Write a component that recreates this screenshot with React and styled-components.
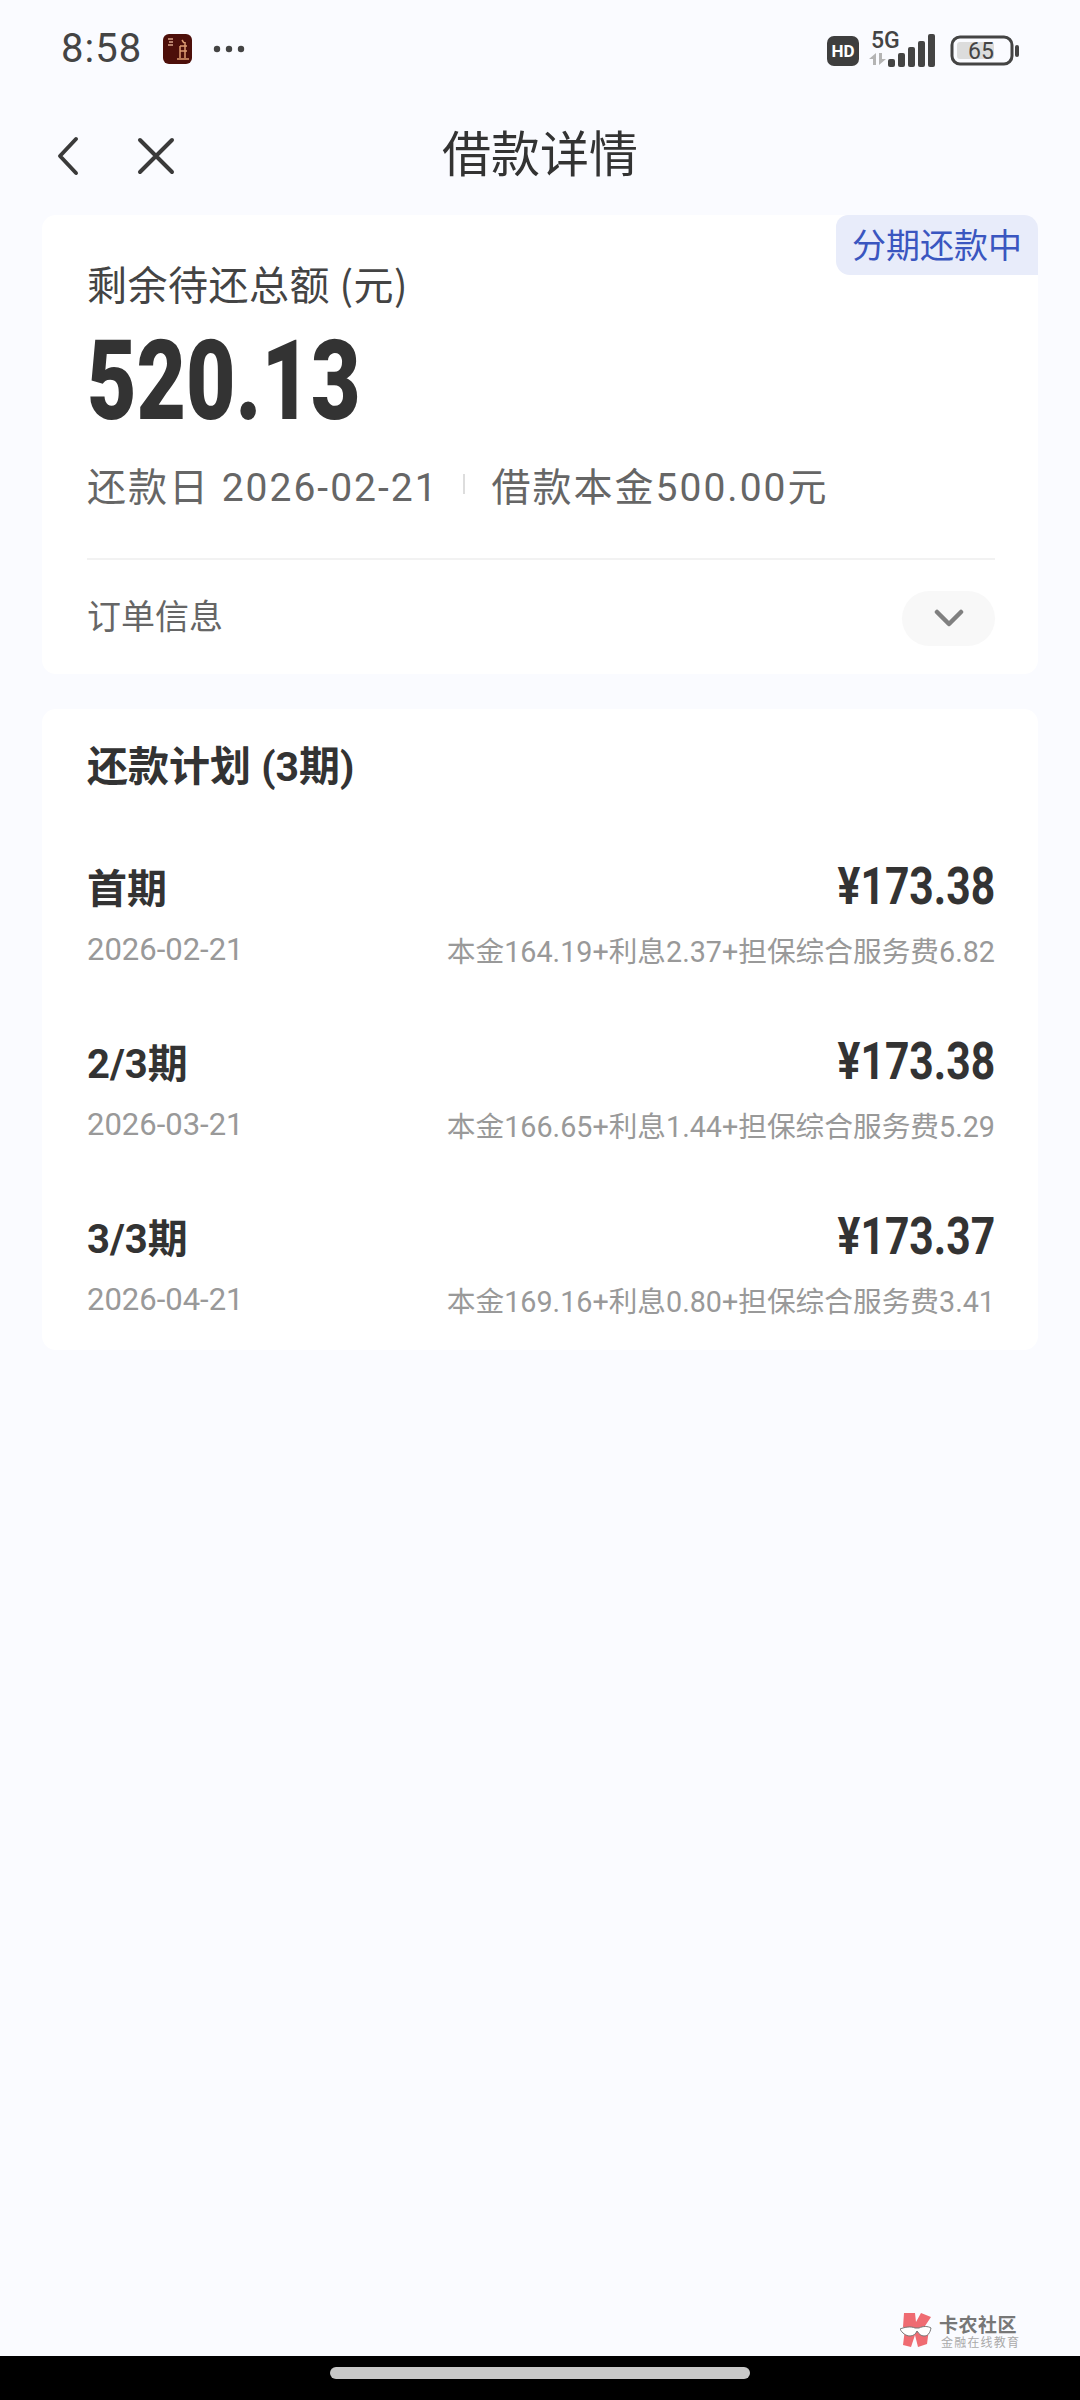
import React from "react";
import styled, { createGlobalStyle } from "styled-components";

const GlobalStyle = createGlobalStyle`
html, body {
  margin: 0;
  padding: 0;
  background: #fafbff;
}
body {
  font-family: Roboto, "Noto Sans CJK SC", sans-serif;
}
`

const Page = styled.div`
width: 1080px;
height: 2400px;
position: relative;
display: flex;
flex-direction: column;
overflow: hidden;
background: #fafbff;
`
const StatusBar = styled.div`
height: 100px;
box-sizing: border-box;
padding: 32px 60px 0 61px;
display: flex;
justify-content: space-between;
align-items: flex-start;
color: #444;
`
const StatusLeft = styled.div`
display: flex;
align-items: center;
height: 34px;
`
const Time = styled.span`
font-size: 40px;
line-height: 34px;
letter-spacing: 1px;
width: 102px;
`
const StatusRight = styled.div`
display: flex;
align-items: flex-start;
height: 34px;
`
const NavBar = styled.div`
height: 115px;
position: relative;
display: flex;
align-items: center;
justify-content: center;
`
const NavIcons = styled.div`
position: absolute;
left: 54px;
top: 36px;
display: flex;
gap: 55px;
align-items: center;
`
const Title = styled.h1`
margin: 0;
font-family: "Noto Sans CJK SC", sans-serif;
font-size: 49px;
font-weight: 400;
color: #333;
line-height: 70px;
margin-top: -13px;
`
const Card = styled.section`
position: relative;
margin: 0 42px;
background: #fff;
border-radius: 14px;
box-sizing: border-box;
`
const SummaryCard = styled(Card)`
height: 459px;
padding: 42px 43px 0 45px;
margin-bottom: 35px;
`
const PlanCard = styled(Card)`
height: 641px;
padding: 32px 43px 0 45px;
`
const Tag = styled.div`
position: absolute;
top: 0;
right: 0;
width: 202px;
height: 60px;
background: #e8ecfa;
color: #3a56c0;
font-family: "Noto Sans CJK SC", sans-serif;
font-size: 34px;
line-height: 58px;
text-align: center;
border-radius: 12px 14px 0 14px;
`
const Label = styled.div`
font-family: "Noto Sans CJK SC", sans-serif;
font-size: 40px;
line-height: 52px;
letter-spacing: 0.5px;
color: #444;
`
const Total = styled.div`
height: 118px;
margin-top: 13px;
font-size: 111px;
line-height: 118px;
font-weight: 900;
color: #333;
transform: scaleX(0.77);
transform-origin: left center;
white-space: nowrap;
`
const MetaRow = styled.div`
display: flex;
align-items: center;
height: 56px;
margin-top: 16px;
font-size: 39px;
letter-spacing: 2px;
color: #666;
`
const MetaText = styled.span`
font-family: Roboto, "Noto Sans CJK SC", sans-serif;
white-space: nowrap;
`
const MetaSep = styled.span`
width: 2px;
height: 20px;
background: #ddd;
margin: 0 27px 0 24px;
`
const Divider = styled.div`
height: 2px;
background: #f2f2f2;
margin-top: 46px;
`
const OrderRow = styled.div`
display: flex;
justify-content: space-between;
align-items: center;
height: 114px;
`
const OrderLabel = styled.span`
font-family: "Noto Sans CJK SC", sans-serif;
font-size: 34px;
color: #666;
margin-top: -6px;
`
const Pill = styled.div`
width: 93px;
height: 55px;
margin-top: 2px;
border-radius: 28px;
background: #f8f8f8;
display: flex;
align-items: center;
justify-content: center;
`
const PlanTitle = styled.h2`
margin: 0 0 24px;
font-family: Roboto, "Noto Sans CJK SC", sans-serif;
font-size: 41px;
line-height: 52px;
font-weight: 700;
color: #333;
`
const PlanRow = styled.div`
height: 175px;
display: grid;
grid-template-columns: auto 1fr;
grid-template-rows: 62px 64px;
align-content: start;
align-items: center;
padding-top: 38px;
box-sizing: border-box;
`
const Period = styled.span`
font-family: Roboto, "Noto Sans CJK SC", sans-serif;
font-size: 40px;
font-weight: 700;
color: #333;
`
const Amount = styled.span`
justify-self: end;
font-size: 52px;
font-weight: 700;
color: #333;
transform: scaleX(0.82);
transform-origin: right center;
white-space: nowrap;
`
const DateText = styled.span`
font-size: 31px;
color: #999;
`
const Detail = styled.span`
justify-self: end;
font-size: 28.7px;
color: #999;
white-space: nowrap;
`
const Watermark = styled.div`
position: absolute;
left: 900px;
top: 2313px;
display: flex;
gap: 5px;
`
const MarkText = styled.div`
display: flex;
flex-direction: column;
font-family: "Noto Sans CJK SC", sans-serif;
`
const MarkName = styled.span`
font-size: 19px;
line-height: 22px;
font-weight: 700;
color: #777;
letter-spacing: 0.5px;
`
const MarkSub = styled.span`
font-size: 12px;
line-height: 14px;
color: #aaa;
letter-spacing: 1.2px;
margin-left: 2px;
`
const HomeBar = styled.div`
position: absolute;
left: 0;
right: 0;
bottom: 0;
height: 44px;
background: #000;
display: flex;
justify-content: center;
padding-top: 11px;
box-sizing: border-box;
`
const HomeHandle = styled.div`
width: 420px;
height: 12px;
border-radius: 6px;
background: #c8c8c8;
`

const plan = [
  { name: "首期", amount: "¥173.38", date: "2026-02-21", detail: "本金164.19+利息2.37+担保综合服务费6.82" },
  { name: "2/3期", amount: "¥173.38", date: "2026-03-21", detail: "本金166.65+利息1.44+担保综合服务费5.29" },
  { name: "3/3期", amount: "¥173.37", date: "2026-04-21", detail: "本金169.16+利息0.80+担保综合服务费3.41" },
]

function AppBadge(){
    return(
        <svg width="29" height="30" viewBox="0 0 29 30" style={{ marginRight: 21 }}>
            <rect width="29" height="30" rx="6" fill="#4d0f0a"/>
            <path d="M5 5h5M6 8h4M5 11h5" stroke="#d9a58a" strokeWidth="1.4"/>
            <path d="M14 25h12M17 12v12M22 8v16M17 12h7M17 17h7M19 6l2 3" stroke="#dd9c72" strokeWidth="1.5" fill="none"/>
        </svg>
    )
}

function Dots(){
    return(
        <svg width="32" height="8" viewBox="0 0 32 8">
            <circle cx="4" cy="4" r="3.2" fill="#444"/>
            <circle cx="16" cy="4" r="3.2" fill="#444"/>
            <circle cx="28" cy="4" r="3.2" fill="#444"/>
        </svg>
    )
}

function HdBadge(){
    return(
        <svg width="32" height="30" viewBox="0 0 32 30" style={{ marginRight: 9, marginTop: 4 }}>
            <rect width="32" height="30" rx="7" fill="#3e3e3e"/>
            <text x="16" y="21" textAnchor="middle" fontFamily="Roboto" fontWeight="700" fontSize="17" fill="#fff">HD</text>
        </svg>
    )
}

function Signal(){
    return(
        <svg width="70" height="42" viewBox="0 0 70 42" style={{ marginRight: 12, marginTop: -6 }}>
            <text x="3" y="22" fontFamily="Roboto" fontWeight="500" fontSize="23" fill="#444">5G</text>
            <path d="M8 27v12H5v-6H1zM11 27h3v6h4l-7 6z" fill="#b4b4b4"/>
            <rect x="20" y="33" width="7" height="8" rx="2" fill="#444"/>
            <rect x="30" y="27" width="7" height="14" rx="2" fill="#444"/>
            <rect x="40" y="21" width="7" height="20" rx="2" fill="#444"/>
            <rect x="50" y="15" width="7" height="26" rx="2" fill="#444"/>
            <rect x="60" y="8" width="7" height="33" rx="2" fill="#444"/>
        </svg>
    )
}

function Battery(){
    return(
        <svg width="70" height="32" viewBox="0 0 70 32" style={{ marginTop: 3 }}>
            <rect x="2" y="2" width="60" height="27" rx="8" fill="none" stroke="#444" strokeWidth="3"/>
            <rect x="7" y="7" width="37" height="17" rx="3" fill="#dcdcdc"/>
            <text x="31" y="24" textAnchor="middle" fontFamily="Roboto" fontSize="23" fill="#444">65</text>
            <rect x="65" y="10" width="4" height="12" rx="2" fill="#444"/>
        </svg>
    )
}

function BackIcon(){
    return(
        <svg width="28" height="40" viewBox="0 0 28 40">
            <path d="M22 3L6 20l16 17" fill="none" stroke="#3a3a3a" strokeWidth="4" strokeLinecap="round" strokeLinejoin="round"/>
        </svg>
    )
}

function CloseIcon(){
    return(
        <svg width="38" height="38" viewBox="0 0 38 38">
            <path d="M3 3l32 32M35 3L3 35" fill="none" stroke="#3a3a3a" strokeWidth="4" strokeLinecap="round"/>
        </svg>
    )
}

function ChevronDown(){
    return(
        <svg width="30" height="20" viewBox="0 0 30 20">
            <path d="M3 4l12 12L27 4" fill="none" stroke="#808080" strokeWidth="4.5" strokeLinecap="round" strokeLinejoin="round"/>
        </svg>
    )
}

function MarkLogo(){
    return(
        <svg width="34" height="34" viewBox="0 0 34 34">
            <path d="M4 0h11l1 9 5-9 10 4-6 9 4 3-2 15-9 3-3-12-4 12-8-2 2-16-2-2z" fill="#ef6b72"/>
            <path d="M0 16c5-2 11-3 15-1h4c4-2 9-2 12 0-1 5-3 8-7 8-3 0-5-2-7-5-1 3-4 5-7 5-4 0-8-3-10-7z" fill="#fff" stroke="#777" strokeWidth="1"/>
        </svg>
    )
}

function App(){
    return(
        <Page>
            <GlobalStyle/>

            <StatusBar>
                <StatusLeft>
                    <Time>8:58</Time>
                    <AppBadge/>
                    <Dots/>
                </StatusLeft>
                <StatusRight>
                    <HdBadge/>
                    <Signal/>
                    <Battery/>
                </StatusRight>
            </StatusBar>

            <NavBar>
                <NavIcons>
                    <BackIcon/>
                    <CloseIcon/>
                </NavIcons>
                <Title>借款详情</Title>
            </NavBar>

            <SummaryCard>
                <Tag>分期还款中</Tag>
                <Label>剩余待还总额 (元)</Label>
                <Total>520.13</Total>
                <MetaRow>
                    <MetaText>还款日 2026-02-21</MetaText>
                    <MetaSep/>
                    <MetaText>借款本金500.00元</MetaText>
                </MetaRow>
                <Divider/>
                <OrderRow>
                    <OrderLabel>订单信息</OrderLabel>
                    <Pill><ChevronDown/></Pill>
                </OrderRow>
            </SummaryCard>

            <PlanCard>
                <PlanTitle>还款计划 (3期)</PlanTitle>
                {plan.map((item) => (
                    <PlanRow key={item.date}>
                        <Period>{item.name}</Period>
                        <Amount>{item.amount}</Amount>
                        <DateText>{item.date}</DateText>
                        <Detail>{item.detail}</Detail>
                    </PlanRow>
                ))}
            </PlanCard>

            <Watermark>
                <MarkLogo/>
                <MarkText>
                    <MarkName>卡农社区</MarkName>
                    <MarkSub>金融在线教育</MarkSub>
                </MarkText>
            </Watermark>

            <HomeBar>
                <HomeHandle/>
            </HomeBar>
        </Page>
    )
}

export default App
